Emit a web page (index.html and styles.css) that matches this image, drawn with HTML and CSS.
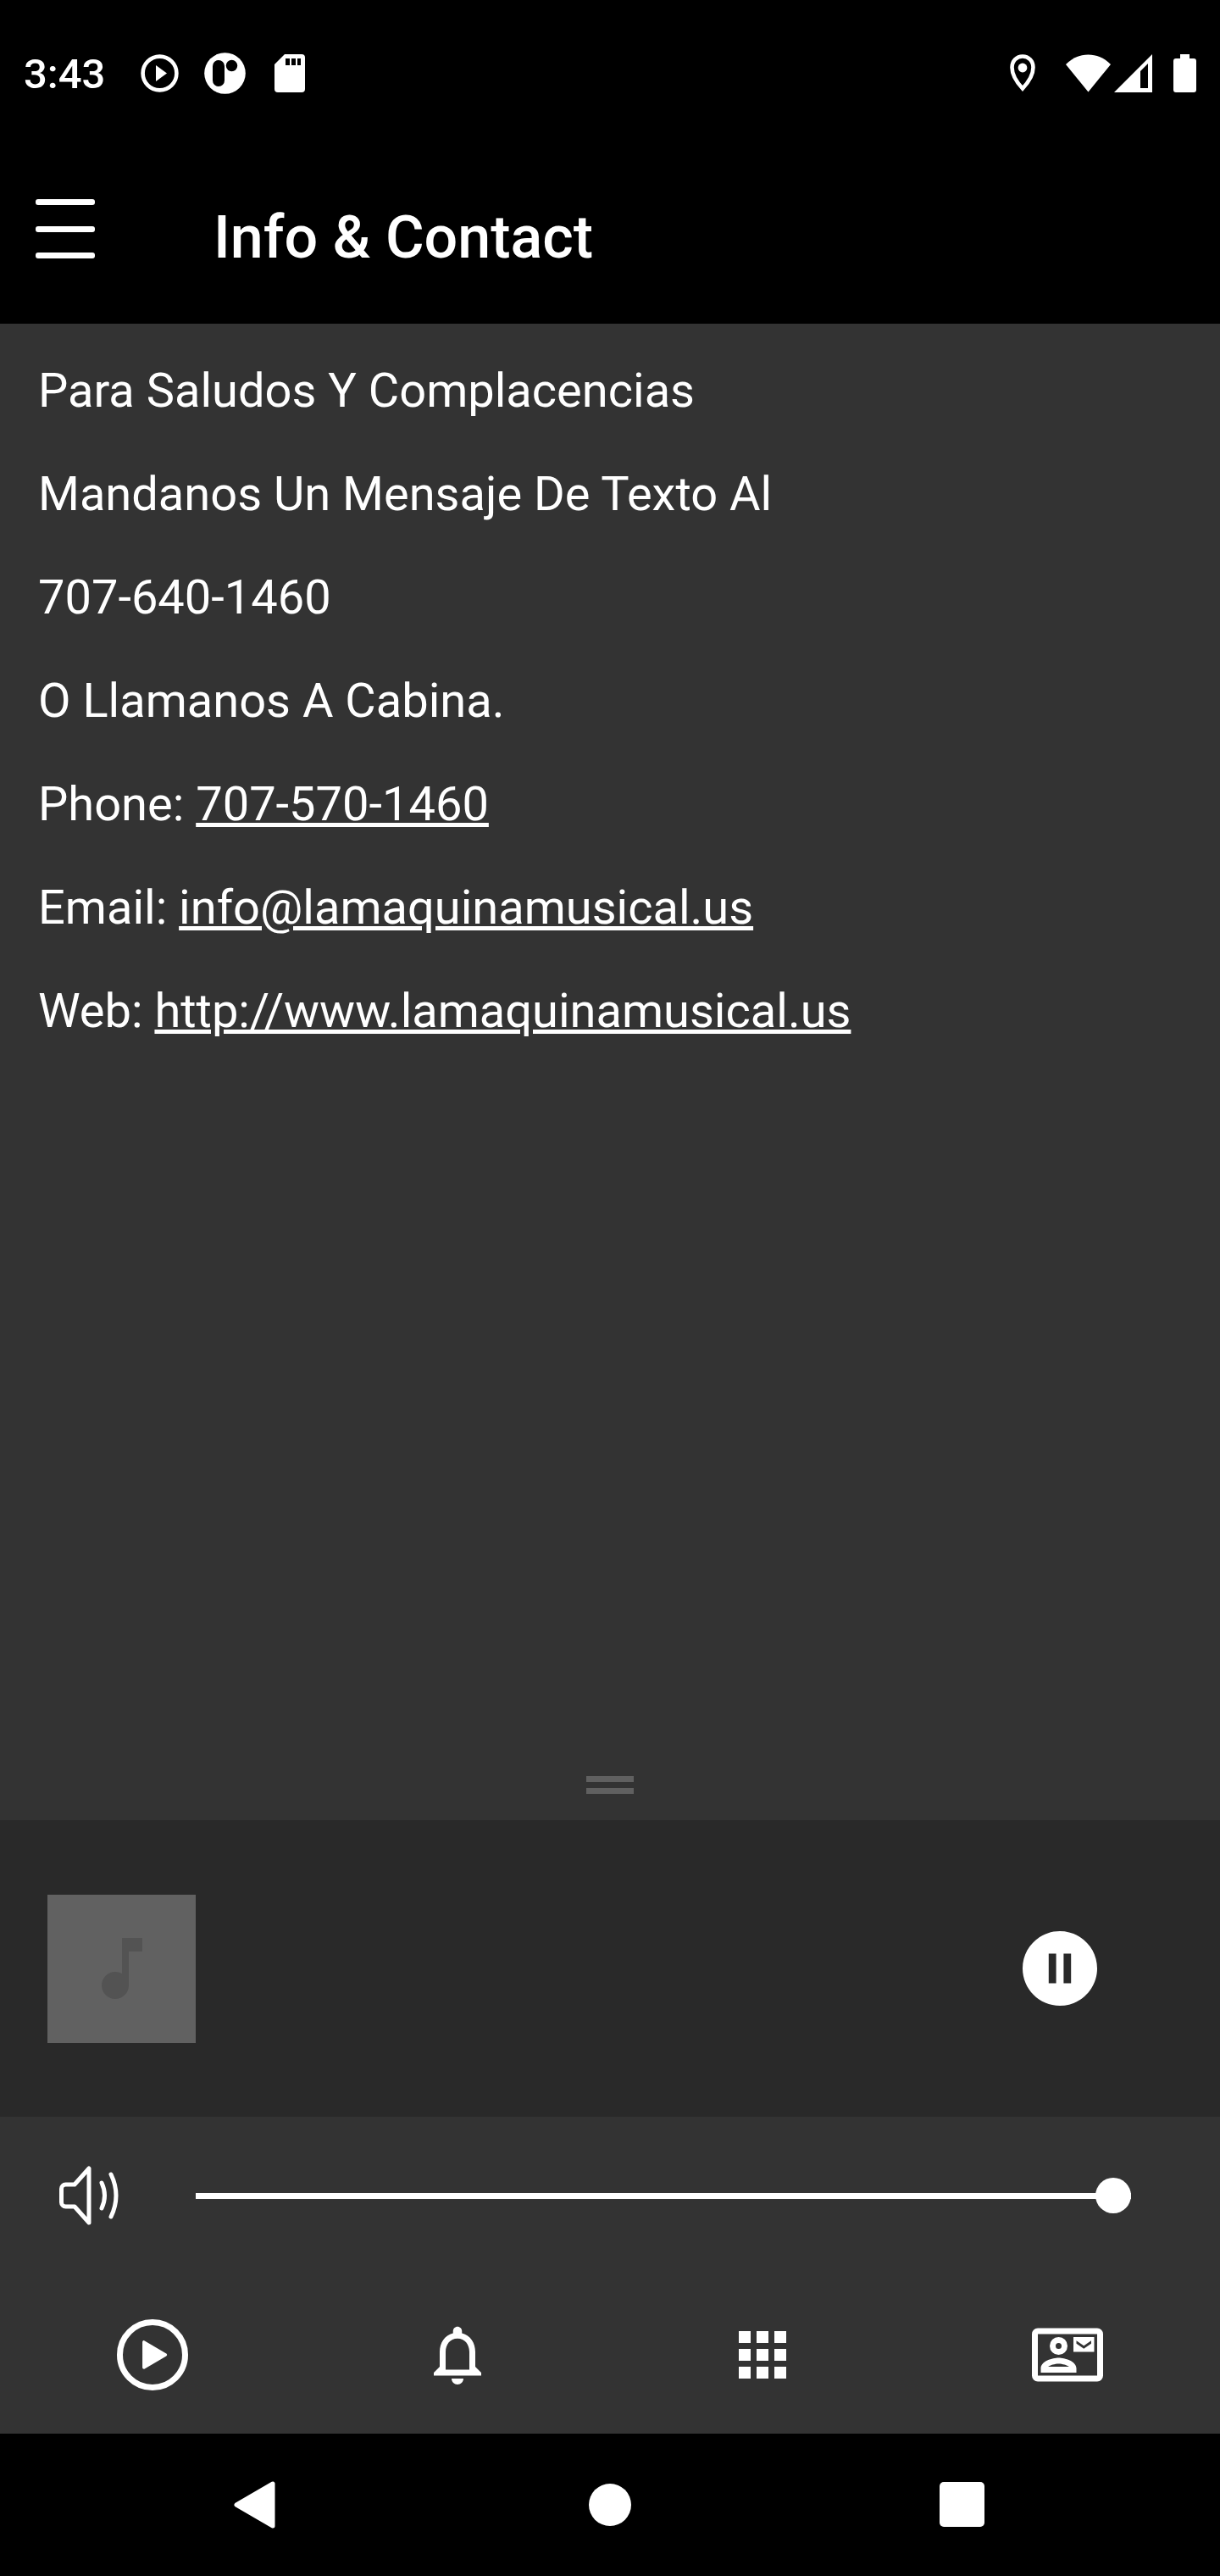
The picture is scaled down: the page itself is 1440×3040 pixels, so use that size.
FILE: index.html
```html
<!DOCTYPE html>
<html lang="es">
<head>
  <meta charset="UTF-8">
  <meta name="viewport" content="width=device-width, initial-scale=1">
  <title>Info &amp; Contact</title>
  <link rel="stylesheet" href="styles.css">
</head>
<body>
  <div class="status-bar">
    <span class="time">3:43</span>
    <div class="status-left">
      <svg width="49" height="49" viewBox="0 0 49 49"><circle cx="24.500" cy="24.500" r="19.900" fill="none" stroke="#fff" stroke-width="4.600"/><path d="M20 15v19l13-9.500z" fill="#fff"/></svg>
      <svg width="49" height="49" viewBox="0 0 49 49"><circle cx="24.500" cy="24.500" r="24.300" fill="#fff"/><rect x="10" y="9" width="14" height="31" rx="7"/><circle cx="32.500" cy="15.500" r="6.700"/></svg>
      <svg width="49" height="49" viewBox="0 0 49 49"><path d="M18 2h20a4 4 0 0 1 4 4v37a4 4 0 0 1-4 4H10a4 4 0 0 1-4-4V14z" fill="#fff"/><path d="M19 7h5v8h-5zM26 7h5v8h-5zM33 7h4v8h-4z"/></svg>
    </div>
    <div class="status-right">
      <svg class="pin" width="30" height="45" viewBox="0 0 30 45"><path d="M15 2.500C8 2.500 2.500 8 2.500 15.500 2.500 24 8.500 33.500 15 40.500 21.500 33.500 27.500 24 27.500 15.500 27.500 8 22 2.500 15 2.500z" fill="none" stroke="#fff" stroke-width="4.600"/><circle cx="15" cy="16" r="5.400" fill="#fff"/></svg>
      <svg class="wifi" width="53" height="45" viewBox="0 0 53 45"><path d="M0 12C8 4 17 .500 26.500.500S45 4 53 12L26.500 44.500z" fill="#fff"/></svg>
      <svg class="signal" width="45" height="45" viewBox="0 0 45 45"><path d="M45 0v45H0z" fill="#fff"/><path d="M40 11v29h-9V20z"/></svg>
      <svg width="27" height="45" viewBox="0 0 27 45"><path d="M8 0h11v5h5a3 3 0 0 1 3 3v34a3 3 0 0 1-3 3H3a3 3 0 0 1-3-3V8a3 3 0 0 1 3-3h5z" fill="#fff"/></svg>
    </div>
  </div>

  <header>
    <button class="menu" aria-label="Menu">
      <span></span>
      <span></span>
      <span></span>
    </button>
    <h1>Info &amp; Contact</h1>
  </header>

  <main>
    <p>Para Saludos Y Complacencias</p>
    <p>Mandanos Un Mensaje De Texto Al</p>
    <p>707-640-1460</p>
    <p>O Llamanos A Cabina.</p>
    <p>Phone: <a href="tel:707-570-1460">707-570-1460</a></p>
    <p>Email: <a href="mailto:info@lamaquinamusical.us">info@lamaquinamusical.us</a></p>
    <p>Web: <a href="http://www.lamaquinamusical.us">http://www.lamaquinamusical.us</a></p>
  </main>

  <div class="handle">
    <span></span>
    <span></span>
  </div>

  <section class="player">
    <div class="cover">
      <svg width="96" height="96" viewBox="0 0 24 24"><path fill="#535353" d="M12 3v10.550c-.590-.340-1.270-.550-2-.550-2.210 0-4 1.790-4 4s1.790 4 4 4 4-1.790 4-4V7h4V3h-6z"/></svg>
    </div>
    <button aria-label="Pause">
      <svg width="88" height="88" viewBox="2 2 20 20"><path fill="#fff" d="M12 2C6.480 2 2 6.480 2 12s4.480 10 10 10 10-4.480 10-10S17.520 2 12 2zm-1 14H9V8h2v8zm4 0h-2V8h2v8z"/></svg>
    </button>
  </section>

  <div class="volume">
    <label for="vol" aria-label="Volume">
      <svg width="70" height="70" viewBox="0 0 70 70" fill="none" stroke="#fff" stroke-width="5" stroke-linecap="round" stroke-linejoin="round"><path d="M35 3v64L18 48H7.500a5 5 0 0 1-5-5V27a5 5 0 0 1 5-5H18z"/><path d="M50 20q7 15 0 30M61 10q12 25 0 50"/></svg>
    </label>
    <input type="range" id="vol" min="0" max="100" value="100">
  </div>

  <nav class="tabs">
    <a href="#" aria-label="Play">
      <svg width="84" height="84" viewBox="0 0 24 24"><circle cx="12" cy="12" r="11" fill="none" stroke="#fff" stroke-width="2"/><path d="M9.100 7.700v8.600l7.300-4.300z" fill="#fff" stroke="#fff" stroke-width="1" stroke-linejoin="round"/></svg>
    </a>
    <a href="#" aria-label="Notifications">
      <svg width="84" height="84" viewBox="0 0 24 24"><path fill="#fff" d="M12 22c1.100 0 2-.900 2-2h-4c0 1.100.900 2 2 2zm6-6v-5c0-3.070-1.630-5.640-4.500-6.320V4c0-.830-.670-1.500-1.500-1.500s-1.500.670-1.500 1.500v.680C7.640 5.360 6 7.920 6 11v5l-2 2v1h16v-1l-2-2zm-2 1H8v-6c0-2.480 1.510-4.500 4-4.500s4 2.020 4 4.500v6z"/></svg>
    </a>
    <a href="#" aria-label="Apps">
      <svg width="84" height="84" viewBox="0 0 24 24"><path fill="#fff" d="M4 8h4V4H4v4zm6 12h4v-4h-4v4zm-6 0h4v-4H4v4zm0-6h4v-4H4v4zm6 0h4v-4h-4v4zm6-10v4h4V4h-4zm-6 4h4V4h-4v4zm6 6h4v-4h-4v4zm0 6h4v-4h-4v4z"/></svg>
    </a>
    <a href="#" aria-label="Contact">
      <svg width="84" height="84" viewBox="0 0 24 24"><rect x="1" y="4" width="22" height="16" rx="1" fill="none" stroke="#fff" stroke-width="2"/><circle cx="9" cy="9" r="2" fill="none" stroke="#fff" stroke-width="2"/><path fill="#fff" fill-rule="evenodd" d="M15 16.590C15 14.090 11.030 13 9 13s-6 1.090-6 3.590V18h12zM5.480 16c.740-.500 2.220-1 3.520-1s2.770.490 3.520 1z"/><path fill="#fff" fill-rule="evenodd" d="M14 6h7v5h-7zM15 7.200v1l2.500 1.700L20 8.200v-1l-2.500 1.700z"/></svg>
    </a>
  </nav>

  <div class="system-nav">
    <button aria-label="Back">
      <svg width="56" height="56" viewBox="0 0 56 56"><path d="M47 3v50L4 28z" fill="#fff" stroke="#fff" stroke-width="5" stroke-linejoin="round"/></svg>
    </button>
    <button aria-label="Home">
      <svg width="56" height="56" viewBox="0 0 56 56"><circle cx="28" cy="28" r="25" fill="#fff"/></svg>
    </button>
    <button aria-label="Recents">
      <svg width="56" height="56" viewBox="0 0 56 56"><rect x="0" y="1" width="53" height="53" rx="5" fill="#fff"/></svg>
    </button>
  </div>
</body>
</html>
```

FILE: styles.css
```css
* {
  box-sizing: border-box;
}
body {
  margin: 0;
  min-height: 100vh;
  display: flex;
  flex-direction: column;
  background-color: #333;
  color: white;
  font-family: Roboto, sans-serif;
}
svg {
  display: block;
}
button {
  background: none;
  border: none;
  padding: 0;
  cursor: pointer;
}

.status-bar {
  height: 172px;
  padding: 0 28px;
  display: flex;
  align-items: center;
  background-color: #000;
}
.time {
  width: 136px;
  padding-top: 4px;
  font-size: 49px;
  font-weight: 500;
  line-height: 56px;
}
.status-left {
  display: flex;
  gap: 28px;
}
.status-right {
  display: flex;
  margin-left: auto;
}
.pin {
  margin-right: 36px;
}
.wifi {
  margin-right: 4px;
}
.signal {
  margin-right: 25px;
}

header {
  height: 210px;
  padding: 63px 42px 0;
  display: flex;
  align-items: flex-start;
  gap: 140px;
  background-color: #000;
}
.menu {
  width: 70px;
  height: 70px;
  display: flex;
  flex-direction: column;
  justify-content: space-between;
}
.menu span {
  width: 70px;
  height: 7px;
  border-radius: 3px;
  background-color: #fff;
}
h1 {
  margin: 0;
  font-size: 70px;
  font-weight: 500;
  line-height: 90px;
}

main {
  flex: 1;
  padding: 46px 45px;
  font-size: 56px;
  line-height: 66px;
}
main p {
  margin: 0 0 56px;
}
main a {
  color: white;
  text-decoration-thickness: 5px;
  text-underline-offset: 3px;
}

.handle {
  height: 84px;
  display: flex;
  flex-direction: column;
  align-items: center;
  justify-content: center;
  gap: 7px;
}
.handle span {
  width: 56px;
  height: 7px;
  background-color: #606060;
}

.player {
  height: 350px;
  padding: 0 145px 0 56px;
  display: flex;
  align-items: center;
  justify-content: space-between;
  background-color: #292929;
}
.cover {
  width: 175px;
  height: 175px;
  display: flex;
  align-items: center;
  justify-content: center;
  background-color: #616161;
}

.volume {
  height: 188px;
  padding: 0 105px 2px 70px;
  display: flex;
  align-items: center;
  gap: 91px;
}
.volume input {
  flex: 1;
  min-width: 0;
  height: 42px;
  margin: 0;
  appearance: none;
  background: linear-gradient(#fff, #fff) center / 100% 7px no-repeat;
}
.volume input::-webkit-slider-thumb {
  appearance: none;
  width: 42px;
  height: 42px;
  border-radius: 50%;
  background-color: #fff;
}

.tabs {
  height: 186px;
  display: flex;
}
.tabs a {
  flex: 1;
  display: flex;
  align-items: center;
  justify-content: center;
}

.system-nav {
  height: 168px;
  padding: 0 95px;
  display: flex;
  background-color: #000;
}
.system-nav button {
  flex: 1;
  display: flex;
  align-items: center;
  justify-content: center;
}
```
